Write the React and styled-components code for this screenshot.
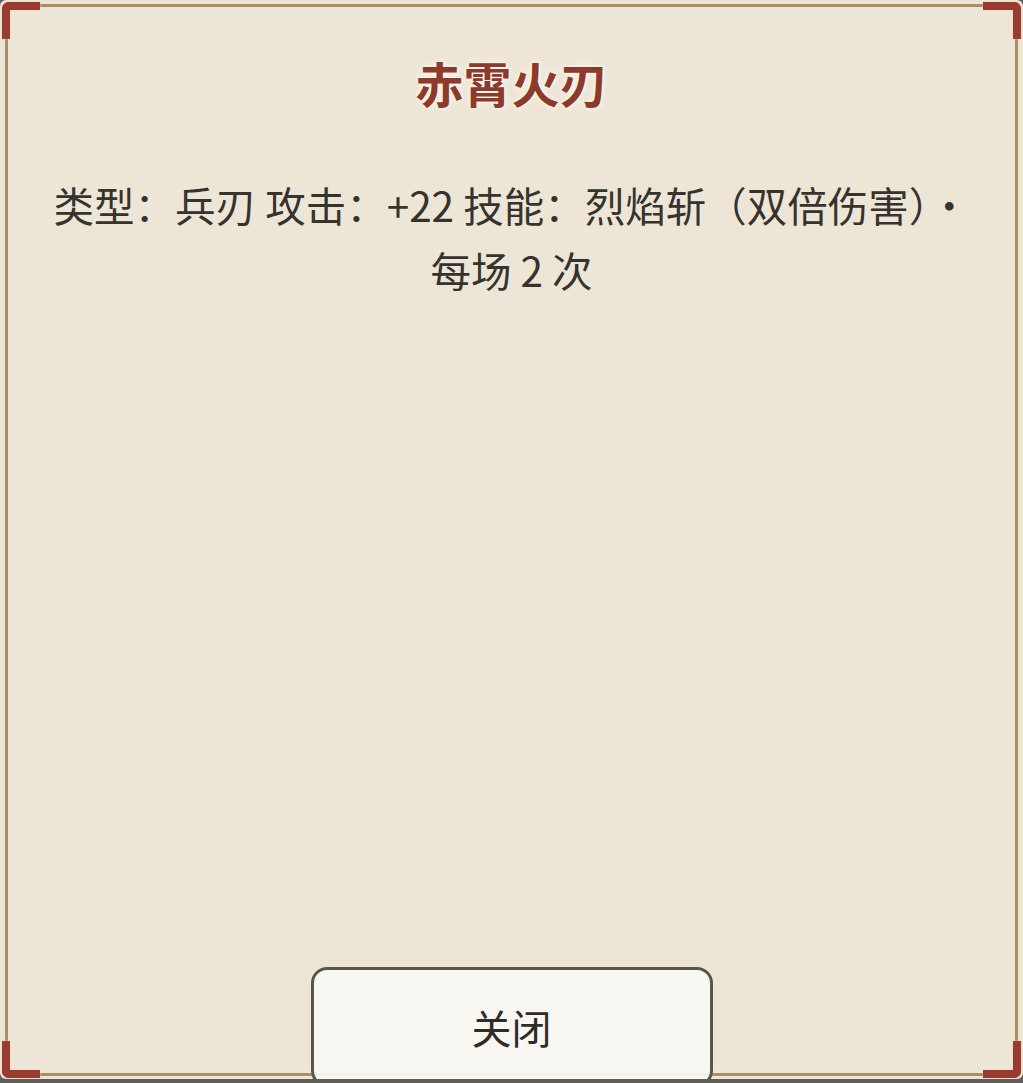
import React from "react";
import styled, { createGlobalStyle } from "styled-components";

const Global = createGlobalStyle`
  html, body { margin: 0; padding: 0; background: #5e5d58; overflow: hidden; }
  * { box-sizing: border-box; }
  body { font-family: "Noto Sans CJK SC", "Noto Sans", sans-serif; }
`;

const Panel = styled.div`
  position: relative;
  height: 1079px;
  background: #ede6d7;
  border-radius: 6px;
  display: flex;
  flex-direction: column;
  align-items: center;
  padding: 49px 50px 0;
`;

const Frame = styled.div`
  position: absolute;
  inset: 4px 5px 3px 5px;
  border: 3px solid #a98f63;
  pointer-events: none;
`;

const Corner = styled.div`
  position: absolute;
  width: 38px;
  height: 37px;
  ${(p) => (p.$top ? "top: 2px;" : "bottom: 1px;")}
  ${(p) => (p.$left ? "left: 2px;" : "right: 2px;")}
  border-color: #973c2f;
  border-style: solid;
  border-width: 0;
  ${(p) => (p.$top ? "border-top-width: 8px;" : "border-bottom-width: 8px;")}
  ${(p) => (p.$left ? "border-left-width: 8px;" : "border-right-width: 8px;")}
  ${(p) =>
    `border-${p.$top ? "top" : "bottom"}-${p.$left ? "left" : "right"}-radius: 7px;`}
  filter: drop-shadow(0 0 1px rgba(255, 200, 190, 0.8));
  pointer-events: none;
`;

const Title = styled.h1`
  margin: 0;
  font-size: 48px;
  line-height: 66px;
  font-weight: 700;
  color: #8d3a2d;
  text-shadow: 0 0 3px #fffaf0, 0 0 6px #fffaf0;
`;

const Description = styled.p`
  margin: 57px 0 0;
  width: 100%;
  text-align: center;
  font-size: 40.5px;
  line-height: 65px;
  color: #36332e;
`;

const Footer = styled.div`
  margin-top: auto;
  margin-bottom: -8px;
  display: flex;
  justify-content: center;
  width: 100%;
  position: relative;
  z-index: 2;
`;

const Button = styled.button`
  width: 402px;
  height: 120px;
  border: 3px solid #5b5750;
  border-radius: 16px;
  background: rgba(250, 248, 243, 0.92);
  font-family: "Noto Sans CJK SC", "Noto Sans", sans-serif;
  font-size: 40px;
  color: #2f2c28;
  padding: 0;
  cursor: pointer;
`;

export default function App() {
  return (
    <>
      <Global />
      <Panel>
        <Frame />
        <Corner $top $left />
        <Corner $top />
        <Corner $left />
        <Corner />
        <Title>赤霄火刃</Title>
        <Description>
          类型：兵刃 攻击：+22 技能：烈焰斩（双倍伤害）· 每场 2 次
        </Description>
        <Footer>
          <Button>关闭</Button>
        </Footer>
      </Panel>
    </>
  );
}
